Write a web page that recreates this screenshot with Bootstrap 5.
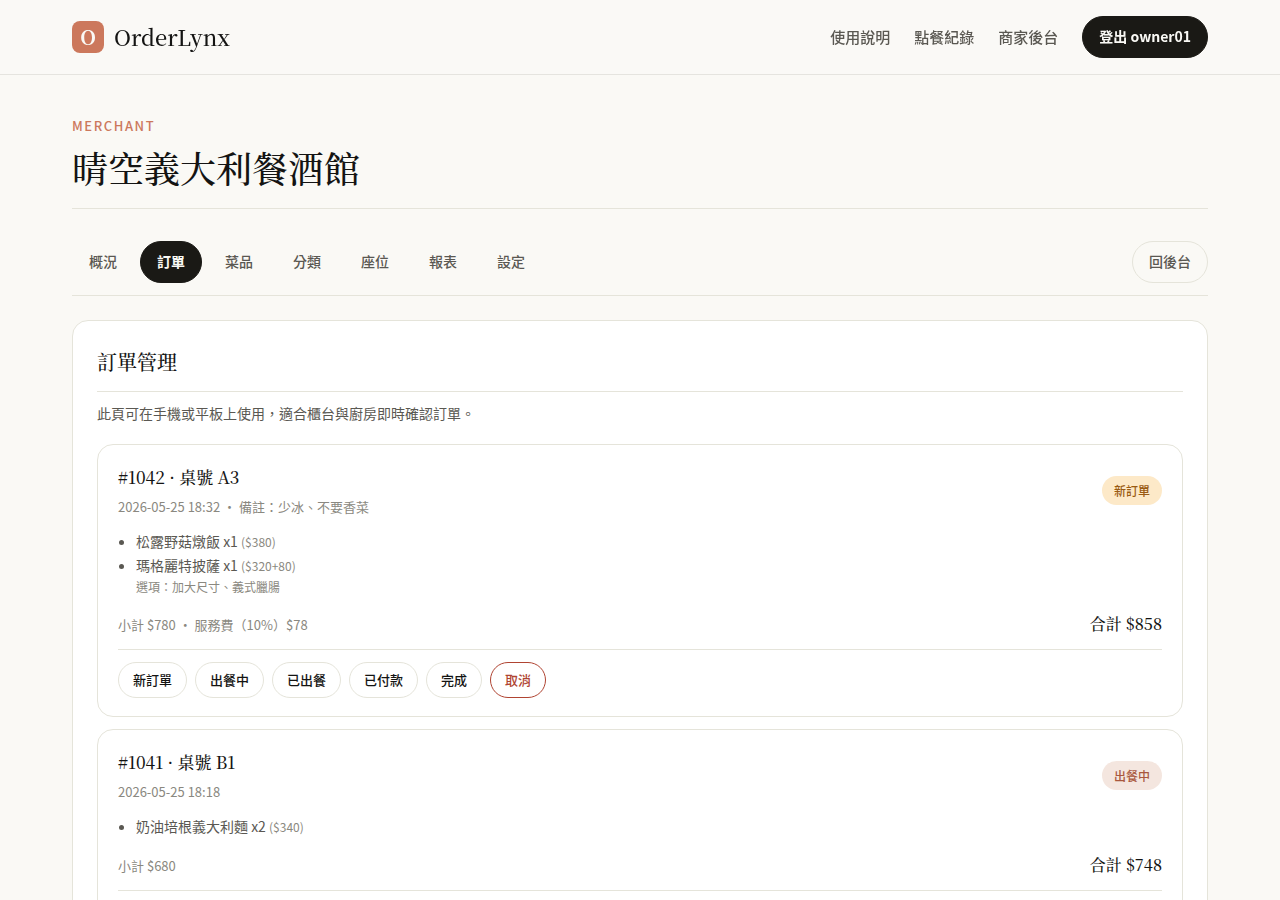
<!DOCTYPE html>
<html lang="zh-Hant">
<head>
<meta charset="utf-8">
<meta name="viewport" content="width=device-width, initial-scale=1">
<title>OrderLynx · 訂單管理</title>
<link href="https://cdn.jsdelivr.net/npm/bootstrap@5.3.0/dist/css/bootstrap.min.css" rel="stylesheet">
<style>
  :root {
    --ink: #141413;
    --ink-fill: #1a1915;
    --ink-soft: #5a5852;
    --ink-mute: #8a8880;
    --line: #e5e4da;
    --paper: #faf9f5;
    --accent: #cc785c;
    --serif: "Noto Serif CJK TC", "Noto Serif TC", "Liberation Serif", serif;
  }
  body {
    background: var(--paper);
    color: var(--ink);
    font-family: "Noto Sans CJK TC", "Noto Sans TC", sans-serif;
    font-size: 16px;
    line-height: 24px;
  }
  a { color: inherit; text-decoration: none; }
  .shell { max-width: 1200px; padding-left: 32px; padding-right: 32px; }
  .serif { font-family: var(--serif); font-weight: 500; margin: 0; }
  .rule-b { border-bottom: 1px solid var(--line); }

  .topbar { background: rgba(250, 249, 245, .92); backdrop-filter: blur(8px); border-bottom: 1px solid #e5e4df; z-index: 10; }
  .brand-link { gap: 10px; }
  .brand-mark { width: 32px; height: 32px; border-radius: 8px; background: var(--accent); color: var(--paper); font: 700 20px/32px var(--serif); }
  .brand-name { font-family: var(--serif); font-weight: 500; font-size: 22px; line-height: 32px; }
  .topnav a { color: var(--ink-soft); font-size: 15px; font-weight: 500; }

  .pill { border: 1px solid transparent; border-radius: 999px; padding: 8px 16px 10px; font-size: 14px; line-height: 22px; font-weight: 500; color: var(--ink-soft); background: transparent; }
  .pill.solid { background: var(--ink-fill); border-color: var(--ink-fill); color: var(--paper); font-weight: 700; }
  .pill.outline { border-color: var(--line); }

  .page-head { padding-top: 41px; }
  .eyebrow { color: var(--accent); font-size: 13px; line-height: 20px; font-weight: 500; letter-spacing: .12em; }
  .page-title { font-size: 36px; line-height: 48px; }
  .tabs-row { padding-bottom: 12px; }
  .tabs-list { gap: 6px; }
  .panel { background: #fff; border: 1px solid var(--line); border-radius: 16px; }
  .panel-title { font-size: 20px; line-height: 34px; padding-bottom: 12px; }
  .hint { color: var(--ink-soft); font-size: 14px; padding-top: 1px; margin-bottom: 19px; }

  .order { border: 1px solid var(--line); border-radius: 16px; padding: 18px 20px; }
  .order + .order { margin-top: 12px; }
  .order-title { font-size: 17px; line-height: 28px; margin-bottom: 4px; }
  .meta { color: var(--ink-mute); font-size: 13px; line-height: 20px; padding-top: 2px; }
  .items { color: var(--ink-soft); font-size: 14px; padding-left: 18px; margin: 12px 0 14px; }
  .items .price { color: var(--ink-mute); font-size: 12px; line-height: 16px; }
  .items .option { color: var(--ink-mute); font-size: 12px; line-height: 20px; }
  .total { font-size: 16px; line-height: 26px; }
  .order-sum { padding-bottom: 12px; }
  .order-acts { padding-top: 12px; }
  .status { border-radius: 999px; padding: 4px 12px; font-size: 12px; line-height: 21px; font-weight: 500; }
  .status.fresh { background: #fde9c8; color: #9a5b13; }
  .status.serving { background: #f4e6df; color: #a9583e; }
  .act { border: 1px solid var(--line); border-radius: 999px; background: #fff; color: var(--ink); padding: 6px 14px; font-size: 13px; line-height: 22px; font-weight: 500; }
  .act.danger { border-color: #b04432; color: #b04432; }
</style>
</head>
<body>
<header class="topbar sticky-top">
  <div class="container-fluid shell d-flex align-items-center justify-content-between py-3">
    <a href="#" class="brand-link d-flex align-items-center">
      <span class="brand-mark text-center">O</span>
      <span class="brand-name">OrderLynx</span>
    </a>
    <nav class="topnav d-flex align-items-center gap-4">
      <a href="#">使用說明</a>
      <a href="#">點餐紀錄</a>
      <a href="#">商家後台</a>
      <button type="button" class="pill solid">登出 owner01</button>
    </nav>
  </div>
</header>

<main class="container-fluid shell pb-5">
  <div class="page-head rule-b pb-3 mb-4">
    <div class="eyebrow mb-2">MERCHANT</div>
    <h1 class="serif page-title">晴空義大利餐酒館</h1>
  </div>

  <nav class="tabs-row rule-b d-flex align-items-center justify-content-between pt-2 mb-4">
    <div class="tabs-list d-flex flex-wrap">
      <a href="#" class="pill">概況</a>
      <a href="#" class="pill solid" aria-current="page">訂單</a>
      <a href="#" class="pill">菜品</a>
      <a href="#" class="pill">分類</a>
      <a href="#" class="pill">座位</a>
      <a href="#" class="pill">報表</a>
      <a href="#" class="pill">設定</a>
    </div>
    <a href="#" class="pill outline">回後台</a>
  </nav>

  <section class="panel p-4">
    <h2 class="serif panel-title rule-b mb-2">訂單管理</h2>
    <p class="hint">此頁可在手機或平板上使用，適合櫃台與廚房即時確認訂單。</p>

    <article class="order">
      <div class="d-flex align-items-center justify-content-between">
        <div>
          <h3 class="serif order-title">#1042 · 桌號 A3</h3>
          <div class="meta">2026-05-25 18:32 ・ 備註：少冰、不要香菜</div>
        </div>
        <span class="status fresh">新訂單</span>
      </div>
      <ul class="items">
        <li>松露野菇燉飯 x1 <span class="price">($380)</span></li>
        <li>瑪格麗特披薩 x1 <span class="price">($320+80)</span>
          <div class="option">選項：加大尺寸、義式臘腸</div>
        </li>
      </ul>
      <div class="order-sum rule-b d-flex align-items-center justify-content-between">
        <span class="meta">小計 $780 ・ 服務費（10%）$78</span>
        <strong class="serif total">合計 $858</strong>
      </div>
      <div class="order-acts d-flex flex-wrap gap-2">
        <button type="button" class="act">新訂單</button>
        <button type="button" class="act">出餐中</button>
        <button type="button" class="act">已出餐</button>
        <button type="button" class="act">已付款</button>
        <button type="button" class="act">完成</button>
        <button type="button" class="act danger">取消</button>
      </div>
    </article>

    <article class="order">
      <div class="d-flex align-items-center justify-content-between">
        <div>
          <h3 class="serif order-title">#1041 · 桌號 B1</h3>
          <div class="meta">2026-05-25 18:18</div>
        </div>
        <span class="status serving">出餐中</span>
      </div>
      <ul class="items">
        <li>奶油培根義大利麵 x2 <span class="price">($340)</span></li>
      </ul>
      <div class="order-sum rule-b d-flex align-items-center justify-content-between">
        <span class="meta">小計 $680</span>
        <strong class="serif total">合計 $748</strong>
      </div>
      <div class="order-acts d-flex flex-wrap gap-2">
        <button type="button" class="act">新訂單</button>
        <button type="button" class="act">出餐中</button>
        <button type="button" class="act">已出餐</button>
        <button type="button" class="act">已付款</button>
        <button type="button" class="act">完成</button>
        <button type="button" class="act danger">取消</button>
      </div>
    </article>
  </section>
</main>
<script src="https://cdn.jsdelivr.net/npm/bootstrap@5.3.0/dist/js/bootstrap.bundle.min.js"></script>
</body>
</html>
